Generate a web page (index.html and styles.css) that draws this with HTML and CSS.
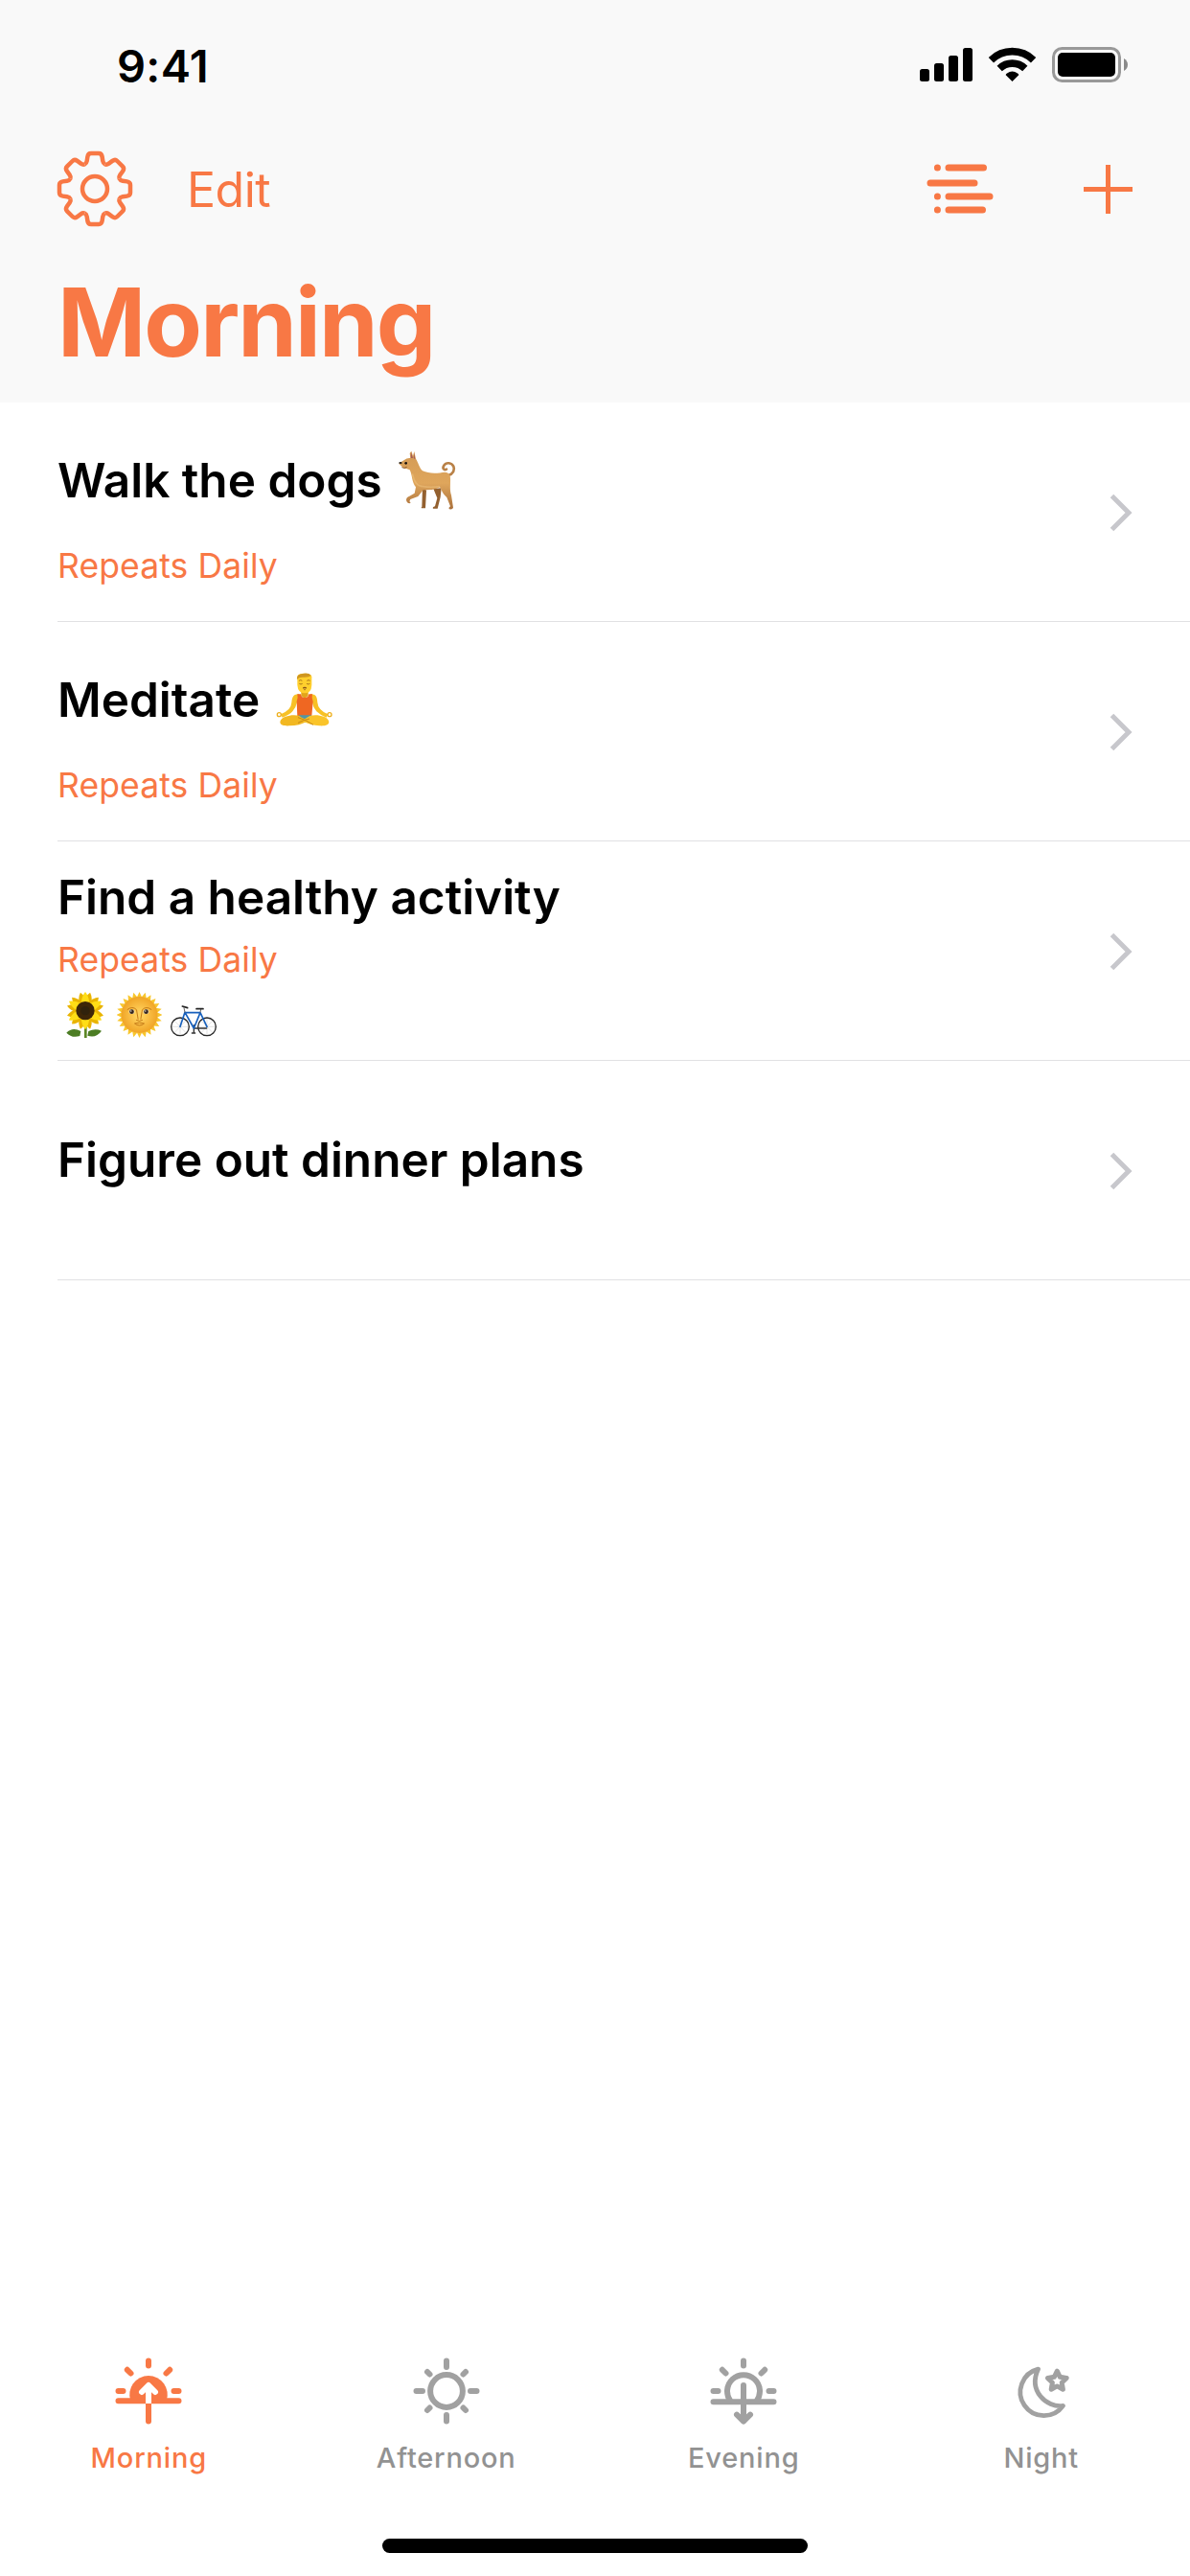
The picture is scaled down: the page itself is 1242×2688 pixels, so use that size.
FILE: index.html
```html
<!DOCTYPE html>
<html lang="en">
<head>
<meta charset="utf-8">
<title>Morning</title>
<link rel="stylesheet" href="styles.css">
</head>
<body>
<div class="screen">
  <header class="header">
    <div class="status">
      <span class="time">9:41</span>
      <svg class="status-icons" width="218" height="38" viewBox="960 49 218 38">
        <rect x="960" y="72" width="10" height="13" rx="2.5"/>
        <rect x="975" y="66" width="10" height="19" rx="2.5"/>
        <rect x="990" y="58" width="10" height="27" rx="2.5"/>
        <rect x="1005" y="50" width="10" height="35" rx="2.5"/>
        <g fill="none" stroke="#000" stroke-width="7.6">
          <path d="M1034.400 62.700A31.500 31.500 0 0 1 1078.600 62.700"/>
          <path d="M1043.200 71.500A19.200 19.200 0 0 1 1069.800 71.500"/>
        </g>
        <path d="M1056.500 85L1049.700 78.200Q1049.700 77 1051 76.400Q1056.500 72.600 1062 76.400Q1063.300 77 1063.300 78.200Z"/>
        <rect x="1099.500" y="50.500" width="69" height="34" rx="9" fill="none" stroke="#999" stroke-width="3"/>
        <rect x="1104" y="55" width="60" height="25" rx="5"/>
        <path d="M1173 61Q1177 63.500 1177 67.500T1173 74Z" fill="#8a8a8a"/>
      </svg>
    </div>
    <nav class="nav">
      <svg class="gear" width="80" height="80" viewBox="-40 -40 80 80">
        <defs><path id="tooth" d="M-10.600 -25.600C-8.800 -26.400 -8.600 -27.200 -8.300 -29L-7.600 -33.500Q-7 -37 -4 -37H4Q7 -37 7.600 -33.500L8.300 -29C8.600 -27.200 8.800 -26.400 10.600 -25.600"/></defs>
        <circle r="13"/>
        <use href="#tooth"/><use href="#tooth" transform="rotate(45)"/><use href="#tooth" transform="rotate(90)"/><use href="#tooth" transform="rotate(135)"/><use href="#tooth" transform="rotate(180)"/><use href="#tooth" transform="rotate(225)"/><use href="#tooth" transform="rotate(270)"/><use href="#tooth" transform="rotate(315)"/>
      </svg>
      <span class="edit">Edit</span>
      <svg class="list-icon" width="70" height="52" viewBox="967 171 70 52">
        <path d="M978.400 175h.01M990 175H1026.500M971 191H1017M978.400 205h.01M990 205H1033M978.400 219h.01M990 219H1025.500"/>
      </svg>
      <svg class="plus" width="51" height="51" viewBox="0 0 51 51"><path d="M25.500 0V51M0 25.500H51"/></svg>
    </nav>
    <h1 class="title">Morning</h1>
  </header>

  <main class="list">
    <section class="row">
      <div class="content">
        <h2 class="task"><span>Walk the dogs</span>
          <svg class="dog" width="62" height="64" viewBox="45 27 186 192" role="img" aria-label="dog">
            <defs><linearGradient id="fur" x1="0" y1="0" x2="0" y2="1"><stop offset="0" stop-color="#d39a55"/><stop offset=".55" stop-color="#dfa65c"/><stop offset="1" stop-color="#aa713c"/></linearGradient></defs>
            <path d="M201 108C216 104 222 91 217 80C211 68 194 66 187 77C181 86 187 93 195 89" fill="none" stroke="#b98147" stroke-width="8" stroke-linecap="round"/>
            <path d="M120 145L118 206Q114 210 117 211H129L132 155ZM154 150L166 179L159 205Q150 208 153 212H167L176 176L179 148Z" fill="#93602f"/>
            <path d="M82 54L80 39L85 32L90 47L94 33L99 56C107 68 109 83 120 94C141 104 170 101 190 98Q207 99 207 116C208 136 204 152 210 170L216 209Q214 216 204 214L202 210L207 205L196 177C181 164 179 151 174 145C159 154 140 154 122 154L106 174L82 183L79 190L83 193L80 196Q70 194 69 185Q69 176 79 173L95 164L99 145C86 130 88 106 80 91L69 87Q58 89 54 79L47 73Q45 66 53 66L64 59Q70 53 82 54Z" fill="url(#fur)"/>
            <path d="M83 54L84 36L90 54ZM92 54L94 39L97 58Z" fill="#a65c55"/>
            <circle cx="68" cy="70" r="4" fill="#19130f"/><ellipse cx="51" cy="69" rx="5" ry="3" fill="#222"/><path d="M55 83Q63 88 71 82" fill="none" stroke="#633a1d" stroke-width="2"/>
            <path d="M88 103Q97 143 121 143Q145 147 174 143" fill="none" stroke="#f0c47f" stroke-width="5" opacity=".5"/>
          </svg>
        </h2>
        <p class="repeat">Repeats Daily</p>
      </div>
      <svg class="chevron" width="26" height="42" viewBox="0 0 26 42"><path d="M3.500 3.500L21 21L3.500 38.500"/></svg>
    </section>

    <section class="row">
      <div class="content">
        <h2 class="task"><span>Meditate</span>
          <svg class="yogi" width="59" height="56" viewBox="27 34 177 168" role="img" aria-label="person meditating">
            <path d="M100 101C82 101 78 108 76 127Q75 140 67 148Q56 159 42 164L47 174Q68 167 79 155Q90 142 94 124ZM134 101C152 101 156 108 157 127Q158 140 166 148Q176 159 190 164L185 174Q166 167 154 155Q143 142 140 124Z" fill="#f7c125"/>
            <circle cx="37" cy="165" r="6" fill="none" stroke="#eeb01e" stroke-width="4"/><circle cx="195" cy="165" r="6" fill="none" stroke="#eeb01e" stroke-width="4"/>
            <path d="M106 88H128V106L117 115L106 106Z" fill="#e2a51a"/>
            <path d="M94 47Q94 36 116 36Q139 36 139 47V72Q138 98 117 98Q96 98 94 72Z" fill="#ffcf2d"/>
            <path d="M93 55Q91 38 110 37Q130 33 137 43Q130 49 112 48Q99 47 93 55Z" fill="#cf9620"/>
            <path d="M99 59Q104 55 109 59M124 59Q129 55 134 59M100 68Q105 72 110 68M123 68Q128 72 133 68" fill="none" stroke="#956316" stroke-width="2.500"/><path d="M111 82Q117 76 123 82ZM114 87H120" fill="#86501c" stroke="#86501c" stroke-width="2"/>
            <path d="M94 101H105Q106 112 117 112Q129 112 130 101H141Q138 114 143 124L139 170H94L92 124Q97 114 94 101Z" fill="#ef6722"/>
            <path d="M98 167H138L127 190H108Z" fill="#5296a5"/>
            <path d="M101 169C78 163 48 170 41 184C36 198 52 201 70 200C90 200 108 196 128 184L105 173Z" fill="#f2b822"/><path d="M133 169C156 163 186 170 192 184C197 198 180 201 163 200C143 199 128 194 108 184Z" fill="#fac42a"/>
            <path d="M96 174Q122 182 144 197M132 178Q114 181 96 191" fill="none" stroke="#c88816" stroke-width="3"/>
          </svg>
        </h2>
        <p class="repeat">Repeats Daily</p>
      </div>
      <svg class="chevron" width="26" height="42" viewBox="0 0 26 42"><path d="M3.500 3.500L21 21L3.500 38.500"/></svg>
    </section>

    <section class="row compact">
      <div class="content">
        <h2 class="task"><span>Find a healthy activity</span></h2>
        <p class="repeat">Repeats Daily</p>
        <div class="stickers">
          <svg width="40" height="48" viewBox="57 44 120 144" role="img" aria-label="sunflower">
            <defs><path id="petal" d="M-13 -20Q-12 -46 0 -59Q12 -46 13 -20Z"/><path id="ray" d="M-8 -55L0 -72L8 -55Z"/></defs>
            <path d="M118 140V188" stroke="#5d8727" stroke-width="8"/><path d="M58 172Q77 153 103 167L100 182Q75 190 58 172ZM168 166Q148 157 127 167L124 181Q151 190 168 166Z" fill="#4c7d24"/>
            <g transform="translate(117 103)" fill="#e9b400"><g transform="rotate(15)"><use href="#petal"/><use href="#petal" transform="rotate(60)"/><use href="#petal" transform="rotate(120)"/><use href="#petal" transform="rotate(180)"/><use href="#petal" transform="rotate(240)"/><use href="#petal" transform="rotate(300)"/><use href="#petal" transform="rotate(30)"/><use href="#petal" transform="rotate(90)"/><use href="#petal" transform="rotate(150)"/><use href="#petal" transform="rotate(210)"/><use href="#petal" transform="rotate(270)"/><use href="#petal" transform="rotate(330)"/></g>
            <g fill="#ffdd16"><use href="#petal"/><use href="#petal" transform="rotate(60)"/><use href="#petal" transform="rotate(120)"/><use href="#petal" transform="rotate(180)"/><use href="#petal" transform="rotate(240)"/><use href="#petal" transform="rotate(300)"/></g><circle r="29" fill="#3d2608"/><circle r="14" fill="#30220c"/></g>
          </svg>
          <svg class="sun" width="47" height="48" viewBox="215 44 141 144" role="img" aria-label="sun with face">
            <defs><radialGradient id="glow"><stop offset=".2" stop-color="#ffd05a"/><stop offset="1" stop-color="#f0a426"/></radialGradient></defs>
            <g transform="translate(285.500 116)" fill="#f8c62d">
              <use href="#ray"/><use href="#ray" transform="rotate(15)"/><use href="#ray" transform="rotate(30)"/><use href="#ray" transform="rotate(45)"/><use href="#ray" transform="rotate(60)"/><use href="#ray" transform="rotate(75)"/><use href="#ray" transform="rotate(90)"/><use href="#ray" transform="rotate(105)"/><use href="#ray" transform="rotate(120)"/><use href="#ray" transform="rotate(135)"/><use href="#ray" transform="rotate(150)"/><use href="#ray" transform="rotate(165)"/><use href="#ray" transform="rotate(180)"/><use href="#ray" transform="rotate(195)"/><use href="#ray" transform="rotate(210)"/><use href="#ray" transform="rotate(225)"/><use href="#ray" transform="rotate(240)"/><use href="#ray" transform="rotate(255)"/><use href="#ray" transform="rotate(270)"/><use href="#ray" transform="rotate(285)"/><use href="#ray" transform="rotate(300)"/><use href="#ray" transform="rotate(315)"/><use href="#ray" transform="rotate(330)"/><use href="#ray" transform="rotate(345)"/>
              <circle r="57" fill="url(#glow)"/>
              <path d="M-38 -16Q-22 -29 -9 -16L-4 14M38 -16Q22 -29 9 -16L4 14M-10 16Q0 23 10 16M-15 27Q0 22 15 27Q0 39 -15 27" fill="none" stroke="#c57b18" stroke-width="3"/>
              <ellipse cx="-24" cy="-10" rx="9" ry="7" fill="#f9eac0"/><ellipse cx="21" cy="-10" rx="9" ry="7" fill="#f9eac0"/><circle cx="-24" cy="-10" r="7" fill="#35251d"/><circle cx="21" cy="-10" r="7" fill="#35251d"/><circle cx="-26" cy="-12" r="2" fill="#fff"/><circle cx="19" cy="-12" r="2" fill="#fff"/>
            </g>
          </svg>
          <svg class="bike" width="48" height="48" viewBox="383 44 144 144" role="img" aria-label="bicycle">
            <g fill="none" stroke-linejoin="round" stroke-linecap="round"><path d="M413 124V182M384 153H442M393 132L433 174M433 132L393 174M497 124V182M468 153H526M477 132L517 174M517 132L477 174" stroke="#aaa" stroke-width="1"/><g stroke="#292929" stroke-width="4"><circle cx="413" cy="153" r="28"/><circle cx="497" cy="153" r="28"/></g><path d="M456 158H496M456 148V172M450 173H460" stroke="#333" stroke-width="4"/><path d="M413 153L428 108L456 158L476 109H430M476 109L497 153" stroke="#1760bd" stroke-width="5"/><path d="M428 108L425 94M476 108L478 99" stroke="#666" stroke-width="3"/><path d="M420 89L436 94M464 97H485" stroke="#242424" stroke-width="5"/></g>
          </svg>
        </div>
      </div>
      <svg class="chevron" width="26" height="42" viewBox="0 0 26 42"><path d="M3.500 3.500L21 21L3.500 38.500"/></svg>
    </section>

    <section class="row single">
      <div class="content"><h2 class="task"><span>Figure out dinner plans</span></h2></div>
      <svg class="chevron" width="26" height="42" viewBox="0 0 26 42"><path d="M3.500 3.500L21 21L3.500 38.500"/></svg>
    </section>
  </main>

  <footer class="footer">
    <div class="tabs">
      <div class="tab active">
        <svg width="70" height="70" viewBox="-35 -35 70 70">
          <path d="M-18.800 10A19.800 19.800 0 1 1 18.800 10Z" fill="currentColor" stroke="none"/>
          <path d="M0 -31.500V-26.500M-22.200 -22.200L-18.500 -18.500M22.200 -22.200L18.500 -18.500M-31.500 0H-26.500M31.500 0H26.500M-31.500 10.300H31.500M0 13V31.500"/>
          <path d="M0 -3V13" stroke="#fff" stroke-linecap="butt"/><path d="M-7 1L0 -6L7 1" stroke="#fff"/>
        </svg>
        <span>Morning</span>
      </div>
      <div class="tab">
        <svg width="70" height="70" viewBox="-35 -35 70 70">
          <circle r="16.900"/><path d="M0 -31.500V-25M0 25V31.500M-31.500 0H-25M25 0H31.500M-20 -20L-17.500 -17.500M20 -20L17.500 -17.500M-20 20L-17.500 17.500M20 20L17.500 17.500"/>
        </svg>
        <span>Afternoon</span>
      </div>
      <div class="tab">
        <svg width="70" height="70" viewBox="-35 -35 70 70">
          <path d="M-13.500 10.500A17 17 0 1 1 13.500 10.500M0 -31.500V-26.500M-22.200 -22.200L-18.500 -18.500M22.200 -22.200L18.500 -18.500M-31.500 0H-26.500M31.500 0H26.500M-31.500 11.300H31.500M0 -6V31.500M-7 24.700L0 31.500L7 24.700"/>
        </svg>
        <span>Evening</span>
      </div>
      <div class="tab">
        <svg width="70" height="70" viewBox="1052 2460.300 70 70">
          <path d="M1083.500 2472.500A24.600 24.600 0 1 0 1109.500 2510.700C1092 2513 1073 2495 1083.500 2472.500Z" stroke-width="4.800"/>
          <path d="M1103.300 2474.500L1106.300 2480.600L1113.200 2481.700L1108.200 2486.500L1109.400 2493.500L1103.300 2490.200L1097.200 2493.500L1098.400 2486.500L1093.400 2481.700L1100.300 2480.600Z" stroke-width="5"/>
        </svg>
        <span>Night</span>
      </div>
    </div>
    <div class="home"></div>
  </footer>
</div>
</body>
</html>
```

FILE: styles.css
```css
* { box-sizing: border-box; margin: 0; padding: 0; }
body { background: #fff; color: #000; font-family: Inter, "Liberation Sans", sans-serif; }
svg { display: block; flex: none; }
.screen { width: 1242px; height: 2688px; display: flex; flex-direction: column; }
.header { height: 420px; background: #f9f9f9; color: #f87845; }
.status { height: 136px; padding: 0 64px 0 122px; display: flex; align-items: center; justify-content: space-between; }
.time { color: #000; font-size: 47px; font-weight: 600; letter-spacing: 0.3px; }
.nav { height: 122px; padding: 0 60px 0 59px; display: flex; align-items: center; }
.gear { fill: none; stroke: currentColor; stroke-width: 4.5; }
.edit { margin: 2px 0 0 56px; font-size: 50px; letter-spacing: -0.5px; }
.list-icon { margin-left: auto; fill: none; stroke: currentColor; stroke-width: 7; stroke-linecap: round; }
.plus { margin-left: 94px; stroke: currentColor; stroke-width: 5; }
.title { padding-left: 60px; font-size: 99px; font-weight: 700; line-height: 156px; letter-spacing: -1.9px; }
.list { flex: 1; }
.row { height: 229px; margin-left: 60px; padding-right: 59px; border-bottom: 1px solid #e1e1e3; display: flex; justify-content: space-between; align-items: center; }
.content { align-self: flex-start; padding-top: 51px; }
.task { height: 60px; display: flex; align-items: center; font-size: 49.5px; font-weight: 600; line-height: 60px; white-space: nowrap; letter-spacing: 0; }
.repeat { margin-top: 39px; color: #f87845; font-size: 35.5px; line-height: 42px; letter-spacing: 0.1px; }
.dog { margin-left: 17px; }
.yogi { margin-left: 17px; }
.compact .content { padding-top: 28px; }
.compact .repeat { margin-top: 15px; }
.single .content { padding-top: 73px; }
.stickers { display: flex; margin: 12px 0 0 9px; }
.sun { margin-left: 12.7px; }
.bike { margin-left: 9px; }
.chevron { fill: none; stroke: #c7c7cc; stroke-width: 5; position: relative; top: 1px; }
.footer { height: 228px; display: flex; flex-direction: column; align-items: center; }
.tabs { width: 100%; display: grid; grid-template-columns: repeat(4, 1fr); }
.tab { display: flex; flex-direction: column; align-items: center; color: #a1a1a1; }
.tab svg { fill: none; stroke: currentColor; stroke-width: 6; stroke-linecap: round; stroke-linejoin: round; }
.tab span { margin-top: 17px; color: #929292; font-size: 29px; line-height: 36px; font-weight: 500; letter-spacing: 0.8px; }
.tab.active, .tab.active span { color: #f87845; }
.home { width: 444px; height: 15px; margin: auto 0 24px; border-radius: 8px; background: #000; }
```
